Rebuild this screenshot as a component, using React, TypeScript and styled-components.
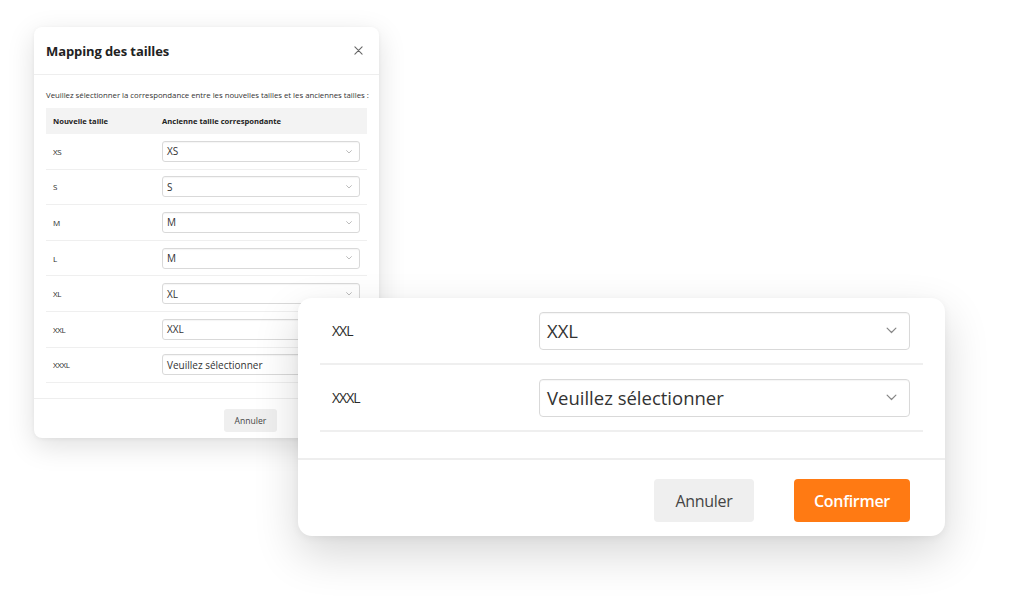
import React from "react";
import styled, { createGlobalStyle } from "styled-components";

const Global = createGlobalStyle`
  html, body { margin: 0; padding: 0; background: #ffffff; }
  body { font-family: "Open Sans", "Noto Sans", sans-serif; color: #333; }
  * { box-sizing: border-box; }
`;

const Canvas = styled.div`
  position: relative;
  width: 1010px;
  height: 613px;
  overflow: hidden;
  background: #fff;
`;

const SmallCard = styled.div`
  position: absolute;
  left: 34px;
  top: 27px;
  width: 345px;
  height: 411px;
  background: #fff;
  border-radius: 8px;
  box-shadow: 0 8px 28px rgba(0, 0, 0, 0.13), 0 1px 4px rgba(0, 0, 0, 0.05);
  display: flex;
  flex-direction: column;
  overflow: hidden;
`;

const Header = styled.div`
  height: 48px;
  padding: 0 16px 0 12px;
  display: flex;
  align-items: center;
  justify-content: space-between;
  border-bottom: 1.5px solid #eeeeee;
`;

const Title = styled.h1`
  margin: 0;
  font-size: 13px;
  font-weight: 700;
  color: #222;
  letter-spacing: -0.1px;
`;

const Close = styled.span`
  display: flex;
  color: #777;
`;

const Body = styled.div`
  padding: 15px 12px 0 12px;
  display: flex;
  flex-direction: column;
`;

const Intro = styled.p`
  margin: 0 0 8px 0;
  font-size: 7.8px;
  color: #333;
  white-space: nowrap;
  letter-spacing: -0.02px;
`;

const TableHead = styled.div`
  display: grid;
  grid-template-columns: 109px 1fr;
  height: 26px;
  align-items: center;
  background: #f3f3f3;
  padding-left: 7px;
  font-size: 7.6px;
  font-weight: 700;
  color: #222;
`;

const Row = styled.div<{ $big?: boolean }>`
  display: grid;
  grid-template-columns: ${(p) => (p.$big ? "207px 1fr" : "109px 1fr")};
  align-items: center;
  height: ${(p) => (p.$big ? "67px" : "35.6px")};
  padding: ${(p) => (p.$big ? "0 13px 0 12px" : "0 7px")};
  border-bottom: ${(p) => (p.$big ? "2px" : "1.5px")} solid #efefef;
`;

const Label = styled.span<{ $big?: boolean }>`
  font-size: ${(p) => (p.$big ? "14px" : "8px")};
  color: #2a2a2a;
  letter-spacing: ${(p) => (p.$big ? "-1px" : "-0.4px")};
`;

const Select = styled.div<{ $big?: boolean }>`
  height: ${(p) => (p.$big ? "38px" : "21px")};
  border: 1px solid #d9d9d9;
  border-radius: ${(p) => (p.$big ? "4px" : "3px")};
  background: #fff;
  display: flex;
  align-items: center;
  justify-content: space-between;
  padding: ${(p) => (p.$big ? "0 12px 0 7px" : "0 7px 0 4px")};
  font-size: ${(p) => (p.$big ? "18.5px" : "10px")};
  color: #333;
  box-shadow: inset 0 1px 1px rgba(0, 0, 0, 0.04);
`;

const SmallFooter = styled.div`
  margin-top: 15px;
  border-top: 1.5px solid #eeeeee;
  flex: 1;
  display: flex;
  justify-content: flex-end;
  align-items: flex-start;
  padding: 10px 102px 0 0;
`;

const Button = styled.button<{ $big?: boolean; $primary?: boolean }>`
  font-family: "Open Sans", "Noto Sans", sans-serif;
  border: none;
  border-radius: ${(p) => (p.$big ? "4px" : "3px")};
  background: ${(p) => (p.$primary ? "#ff7a13" : "#efefef")};
  color: ${(p) => (p.$primary ? "#fff" : "#444")};
  font-size: ${(p) => (p.$big ? "16px" : "8.6px")};
  font-weight: ${(p) => (p.$primary ? 600 : 400)};
  height: ${(p) => (p.$big ? "43px" : "23px")};
  padding: 0;
  width: ${(p) => (p.$big ? (p.$primary ? "116px" : "100px") : "53px")};
  letter-spacing: ${(p) => (p.$big ? "-0.3px" : "0")};
`;

const BigCard = styled.div`
  position: absolute;
  left: 298px;
  top: 298px;
  width: 647px;
  height: 238px;
  background: #fff;
  border-radius: 14px;
  box-shadow: 0 18px 45px rgba(0, 0, 0, 0.16), 0 2px 8px rgba(0, 0, 0, 0.05);
  display: flex;
  flex-direction: column;
  overflow: hidden;
`;

const BigBody = styled.div`
  padding: 0 22px;
  height: 162px;
  border-bottom: 2px solid #eeeeee;
`;

const BigFooter = styled.div`
  flex: 1;
  display: flex;
  justify-content: flex-end;
  align-items: flex-start;
  gap: 40px;
  padding: 19px 35px 0 0;
`;

const Chevron = ({ size, color }: { size: number; color: string }) => (
  <svg width={size} height={size * 0.6} viewBox="0 0 10 6" fill="none">
    <path d="M1 1l4 4 4-4" stroke={color} strokeWidth="1.1" strokeLinecap="round" strokeLinejoin="round" />
  </svg>
);

const CloseIcon = () => (
  <svg width="9" height="9" viewBox="0 0 10 10" fill="none">
    <path d="M1 1l8 8M9 1l-8 8" stroke="#666" strokeWidth="1.2" strokeLinecap="round" />
  </svg>
);

const rows: [string, string][] = [
  ["XS", "XS"],
  ["S", "S"],
  ["M", "M"],
  ["L", "M"],
  ["XL", "XL"],
  ["XXL", "XXL"],
  ["XXXL", "Veuillez sélectionner"],
];

export default function App() {
  return (
    <>
      <Global />
      <Canvas>
        <SmallCard>
          <Header>
            <Title>Mapping des tailles</Title>
            <Close>
              <CloseIcon />
            </Close>
          </Header>
          <Body>
            <Intro>
              Veuillez sélectionner la correspondance entre les nouvelles tailles et les anciennes tailles :
            </Intro>
            <TableHead>
              <span>Nouvelle taille</span>
              <span>Ancienne taille correspondante</span>
            </TableHead>
            {rows.map(([n, o]) => (
              <Row key={n}>
                <Label>{n}</Label>
                <Select>
                  <span>{o}</span>
                  <Chevron size={6} color="#999" />
                </Select>
              </Row>
            ))}
          </Body>
          <SmallFooter>
            <Button>Annuler</Button>
          </SmallFooter>
        </SmallCard>

        <BigCard>
          <BigBody>
            {rows.slice(5).map(([n, o]) => (
              <Row $big key={n}>
                <Label $big>{n}</Label>
                <Select $big>
                  <span>{o}</span>
                  <Chevron size={11} color="#888" />
                </Select>
              </Row>
            ))}
          </BigBody>
          <BigFooter>
            <Button $big>Annuler</Button>
            <Button $big $primary>
              Confirmer
            </Button>
          </BigFooter>
        </BigCard>
      </Canvas>
    </>
  );
}
